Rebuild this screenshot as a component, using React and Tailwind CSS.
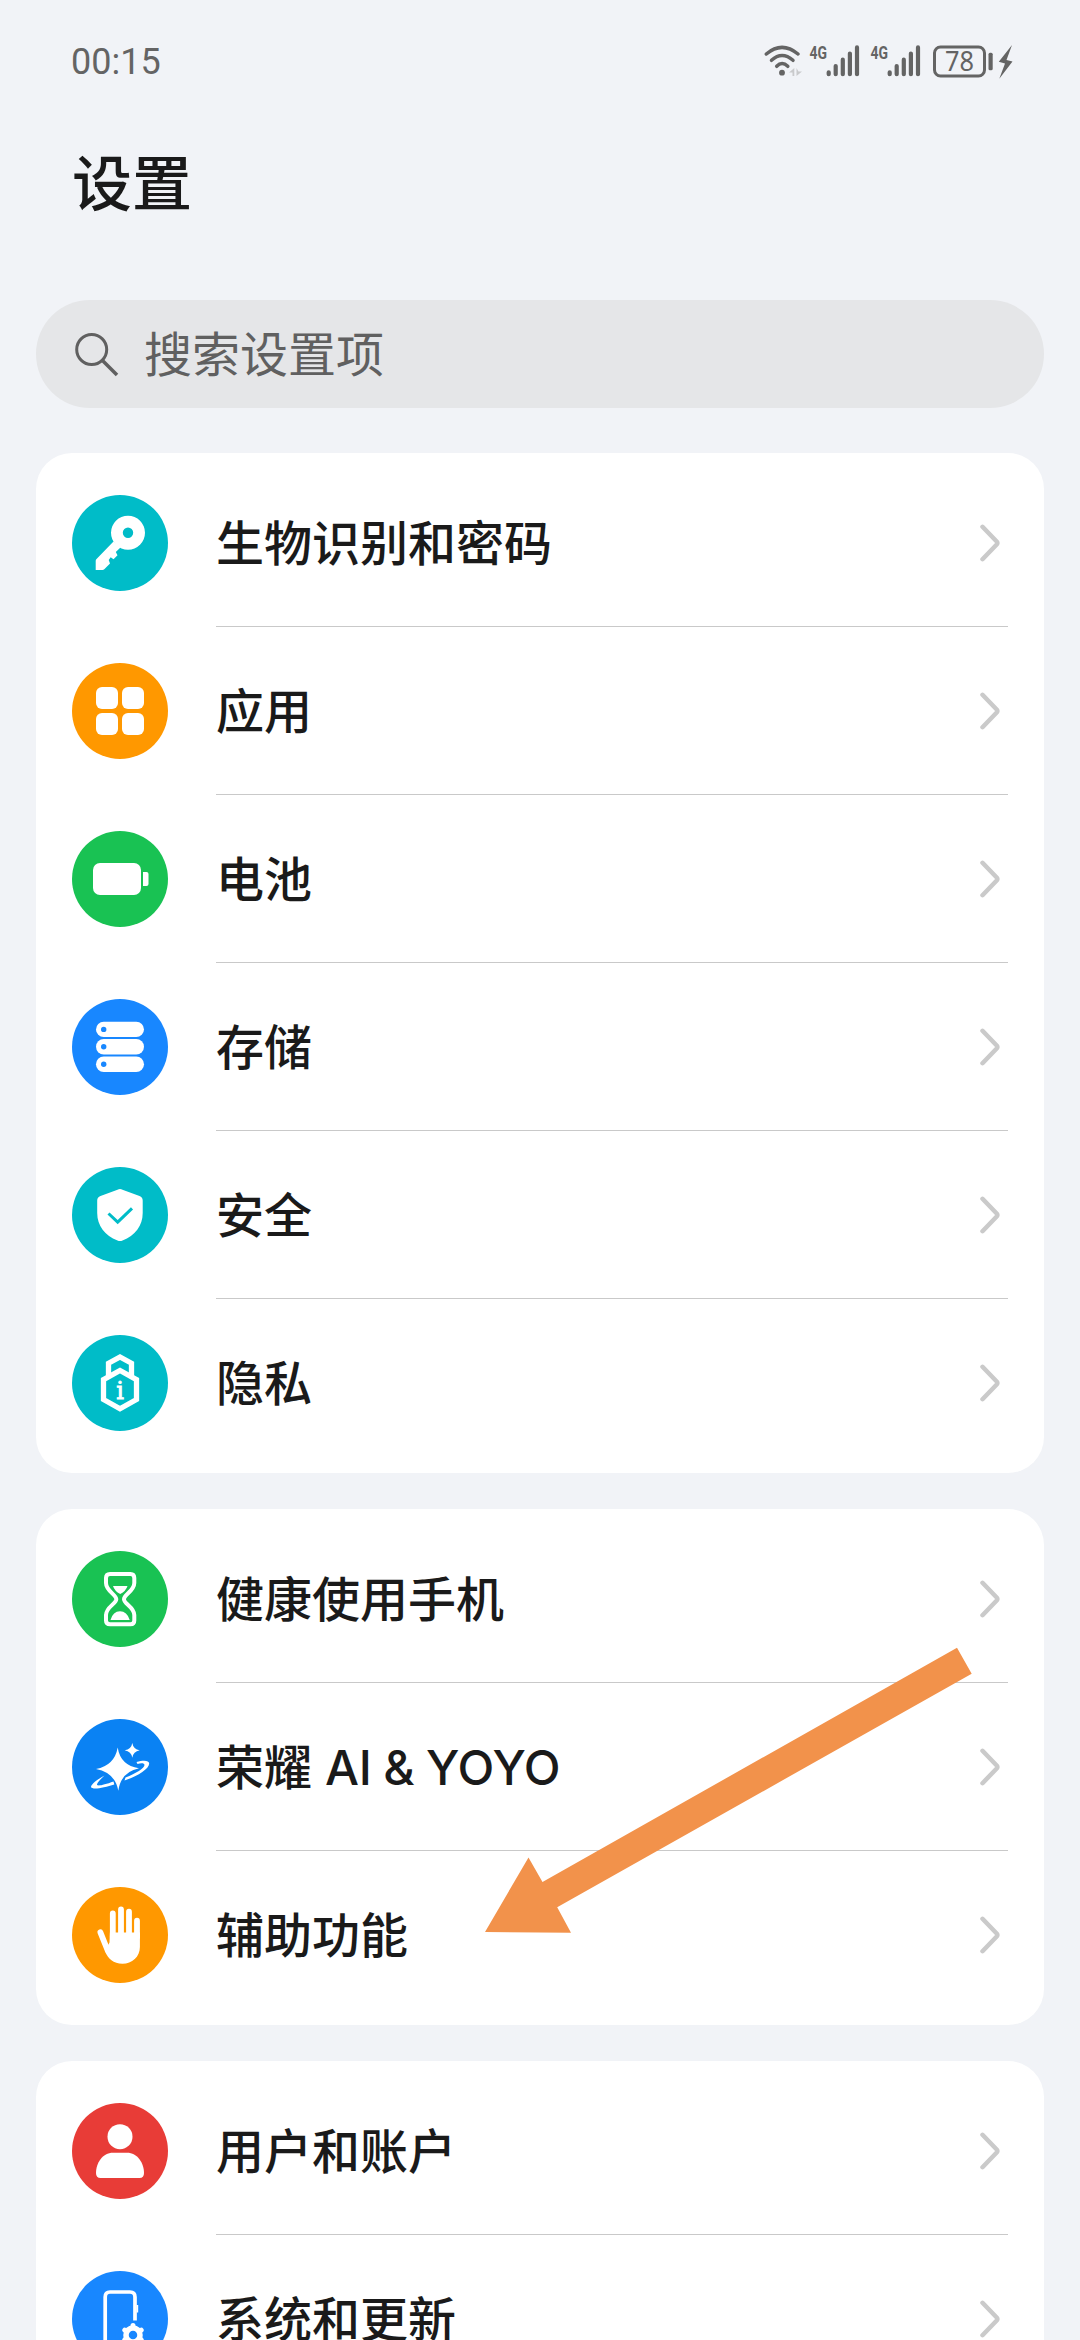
const icons = {
  key: (
    <>
      <path
        fillRule="evenodd"
        d="M56 20.700a17 17 0 1 1 0 34 17 17 0 1 1 0-34zM56 32.500a5.200 5.200 0 1 0 0 10.400 5.200 5.200 0 1 0 0-10.400z"
      />
      <path d="M41.500 46.500 24.300 64.300Q23.700 65 23.700 66V75H30.500Q31.500 75 32.300 74.200L38 68.500 36.700 65 38.700 62.300 41.500 64.300 45.500 60.300 43.800 57 48.500 52.500z" />
    </>
  ),
  apps: (
    <>
      <rect x="24" y="24" width="22" height="22" rx="6" />
      <rect x="50" y="24" width="22" height="22" rx="6" />
      <rect x="24" y="50" width="22" height="22" rx="6" />
      <rect x="50" y="50" width="22" height="22" rx="6" />
    </>
  ),
  battery: (
    <>
      <rect x="21" y="32" width="48" height="32" rx="7" />
      <path d="M71 41h3.500q2 0 2 2v10q0 2-2 2H71z" />
    </>
  ),
  storage: (
    <>
      {[22.7, 40, 57.5].map((y) => (
        <g key={y}>
          <rect x="24" y={y} width="48" height="15.4" rx="7.7" />
          <circle cx="31.7" cy={y + 7.7} r="2.7" fill="#1887ff" />
        </g>
      ))}
    </>
  ),
  shield: (
    <>
      <path d="M45.500 22.700Q48 21.500 50.500 22.700L67.500 29Q70.700 30.300 70.700 33.500V46C70.700 59 63 68.500 50.500 73.500Q48 74.500 45.500 73.500C33 68.500 25.200 59 25.200 46V33.500Q25.200 30.300 28.500 29z" />
      <path d="M36.500 46.500 45.700 55.200 60 41.300" fill="none" stroke="#00bcc8" strokeWidth="3" />
    </>
  ),
  privacy: (
    <>
      <g fill="none" stroke="white" strokeWidth="5.3">
        <path d="M31.500 44.600 48 35.500 64.500 44.600V64.500L48 73.800 31.500 64.500z" />
        <path d="M36.500 42V28.300L48 22 59.500 28.300V42" />
      </g>
      <text x="48" y="63.8" textAnchor="middle" stroke="white" strokeWidth="0.8" className="font-['DejaVu_Serif'] text-[24px]">
        i
      </text>
    </>
  ),
  hourglass: (
    <>
      <path
        fill="none"
        stroke="white"
        strokeWidth="4"
        d="M38 23H58.500Q62.300 23 62.300 27V32C62.300 40 52 43.500 52 48.200S62.300 56 62.300 64V69.500Q62.300 73.300 58.500 73.300H38Q34 73.300 34 69.500V64C34 56 44.300 52.800 44.300 48.200S34 40 34 32V27Q34 23 38 23z"
      />
      <path d="M41 35H55.500Q54 40 48.200 43 42.500 40 41 35zM38.500 69Q41 60.300 48 60.300T57.700 69z" />
    </>
  ),
  yoyo: (
    <>
      <path d="M45.700 28.500Q48.500 46.500 67 49.300 49 53 46.300 71.700 43 53.500 24 50 42.500 46.500 45.700 28.500z" />
      <path d="M60.300 24Q61.300 30.300 67.700 31.300 61.300 32.500 60.300 38.700 59.300 32.500 52.700 31.300 59.300 30.300 60.300 24z" />
      <path d="M64.500 43C71 41 77 41 77.200 44.500 77 50 66 57 52.500 61.500L53.500 58.500C64 54.500 72.500 49 72.500 46 72.500 44 69 44 65.500 45z" />
      <path d="M32.500 56.500C25 60.500 19 65.500 19 68 20 71 32 69 42.300 65.500L41.500 62.500C32 66 25 67.500 25 65.500 25.500 63 29 60 32.500 56.500z" />
    </>
  ),
  hand: (
    <>
      <g stroke="white" strokeWidth="5.8" strokeLinecap="round">
        <path d="M40.800 26.500V50M49 22.500V50M57 24.700V50M65 33.700V50" />
        <path d="M28.400 45.300 35.500 63" />
      </g>
      <path d="M37.900 45.500H67.900V60C67.900 70 60 76.700 50.500 76.700 41.500 76.700 36 72 32.800 64L37.500 55.500z" />
    </>
  ),
  user: (
    <>
      <circle cx="48" cy="33.7" r="12.5" />
      <path d="M41 49.700H55C65.500 49.700 72 60 72 70Q72 75 67.500 75H28.500Q24 75 24 70C24 60 30.500 49.700 41 49.700z" />
    </>
  ),
  system: (
    <>
      <path
        fill="none"
        stroke="white"
        strokeWidth="3.7"
        d="M63 49.500V26Q63 21 58 21H38Q33.200 21 33.200 26V71Q33.200 76 38 76H48"
      />
      <path d="M64.500 34h1.700v7.500h-1.700z" />
      <circle cx="61" cy="64" r="7" fill="none" stroke="white" strokeWidth="5.5" />
      <path
        fill="none"
        stroke="white"
        strokeWidth="5"
        strokeLinecap="round"
        d="M61 54.500V56M69.200 59.200 68 60M69.200 68.800 68 68M61 73.500V72M52.800 68.800 54 68M52.800 59.200 54 60"
      />
    </>
  ),
}

const groups = [
  [
    { label: '生物识别和密码', icon: 'key', color: 'bg-[#00bcc8]' },
    { label: '应用', icon: 'apps', color: 'bg-[#ff9800]' },
    { label: '电池', icon: 'battery', color: 'bg-[#19c253]' },
    { label: '存储', icon: 'storage', color: 'bg-[#1887ff]' },
    { label: '安全', icon: 'shield', color: 'bg-[#00bcc8]' },
    { label: '隐私', icon: 'privacy', color: 'bg-[#00bcc8]' },
  ],
  [
    { label: '健康使用手机', icon: 'hourglass', color: 'bg-[#19c253]' },
    { label: '荣耀', latin: 'AI & YOYO', icon: 'yoyo', color: 'bg-[#0a82f3]' },
    { label: '辅助功能', icon: 'hand', color: 'bg-[#ff9800]' },
  ],
  [
    { label: '用户和账户', icon: 'user', color: 'bg-[#e83c37]' },
    { label: '系统和更新', icon: 'system', color: 'bg-[#1887ff]' },
  ],
]

const Signal = ({ x }) => (
  <g transform={`translate(${x} 0)`}>
    <text x="0" y="19" textLength="17.5" lengthAdjust="spacingAndGlyphs" className="font-[Roboto] text-[19px] font-bold">
      4G
    </text>
    <path
      fill="none"
      stroke="#646464"
      strokeWidth="4.2"
      strokeLinecap="round"
      d="M19.200 32.300V34.200M26.200 26V34.200M33.300 19.700V34.200M40.400 13.500V34.200M47.500 7.400V34.200"
    />
  </g>
)

const StatusBar = () => (
  <header className="flex h-[124px] items-center justify-between pl-[71px] pr-16 text-[#646464]">
    <span className="font-[Roboto] text-[36px] leading-none">00:15</span>
    <svg viewBox="0 0 256 44" className="h-11 w-64" fill="#646464">
      <g fill="none" stroke="#646464" strokeWidth="3.5" strokeLinecap="round">
        <path d="M6.300 14Q22 .800 38 14" />
        <path d="M11.500 20.300Q22 10.800 33 20.300" />
        <path d="M16.700 26.300Q22 20.700 27.800 26.300" />
      </g>
      <circle cx="22" cy="32.7" r="2.9" />
      <path d="M34.300 28v8h-1.800v-3.500H29zM36.500 28v8L42 31.500h-3.500z" fill="#c9cacc" />
      <Signal x={49.5} />
      <Signal x={110.5} />
      <rect x="174.5" y="7" width="50" height="29" rx="6" fill="none" stroke="#646464" strokeWidth="3" />
      <text x="185" y="31" textLength="29" lengthAdjust="spacingAndGlyphs" className="font-['Noto_Sans'] text-[27px]">
        78
      </text>
      <rect x="228.5" y="12.8" width="4.2" height="17.5" rx="1.5" />
      <path d="M252 5 238.800 21.800 245 23.500 239.300 38.800 252.500 21.500 246.500 20z" />
    </svg>
  </header>
)

const Row = ({ label, latin, icon, color, last }) => (
  <li className="flex h-[168px] px-9">
    <div className="flex w-36 shrink-0 items-center">
      <span className={`size-24 rounded-full ${color}`}>
        <svg viewBox="0 0 96 96" className="size-24" fill="white">
          {icons[icon]}
        </svg>
      </span>
    </div>
    <div className={`flex flex-1 items-center justify-between border-b pr-2 ${last ? 'border-transparent' : 'border-[#c9c9c9]'}`}>
      <div className="flex h-12 items-baseline gap-[13px] text-[48px] font-medium leading-[42px]">
        <span>{label}</span>
        {latin && <span className="font-[Inter] leading-none tracking-[-0.2px] [word-spacing:-1px]">{latin}</span>}
      </div>
      <svg
        viewBox="0 0 20 38"
        className="h-[38px] w-5"
        fill="none"
        stroke="#cacaca"
        strokeWidth="4.5"
        strokeLinecap="round"
        strokeLinejoin="round"
      >
        <path d="M2.500 2.800 16.700 17.500Q18 19 16.700 20.500L2.500 35.200" />
      </svg>
    </div>
  </li>
)

const App = () => (
  <div className="relative h-[2340px] w-[1080px] overflow-hidden bg-[#f1f3f7] font-['Noto_Sans_CJK_SC',sans-serif] text-[#1a1a1a]">
    <StatusBar />
    <h1 className="flex h-28 items-center pl-[72px] text-[60px] font-medium leading-none">设置</h1>

    <main className="mt-16 flex flex-col gap-9 px-9">
      <div className="mb-[9px] flex h-[108px] items-center rounded-full bg-[#e5e6e8] pl-9 text-[#606060]">
        <svg viewBox="0 0 48 48" className="size-12" fill="none" stroke="#606060" strokeWidth="3">
          <circle cx="19.7" cy="19.5" r="15" />
          <path d="M30 30 45 45" strokeWidth="3.5" />
        </svg>
        <span className="ml-6 pb-1.5 text-[48px] leading-none">搜索设置项</span>
      </div>

      {groups.map((rows) => (
        <ul key={rows[0].label} className="rounded-[36px] bg-white py-1.5">
          {rows.map((row, i) => (
            <Row key={row.label} {...row} last={i === rows.length - 1} />
          ))}
        </ul>
      ))}
    </main>

    <svg viewBox="0 0 488 286" className="absolute left-[485px] top-[1647px] h-[286px] w-[488px]" fill="#f2924b">
      <path d="M0 285 43.500 210.500 57.500 235 472 .700 486.700 26.700 72.200 260.300 86 285.700z" />
    </svg>
  </div>
)

export default App
